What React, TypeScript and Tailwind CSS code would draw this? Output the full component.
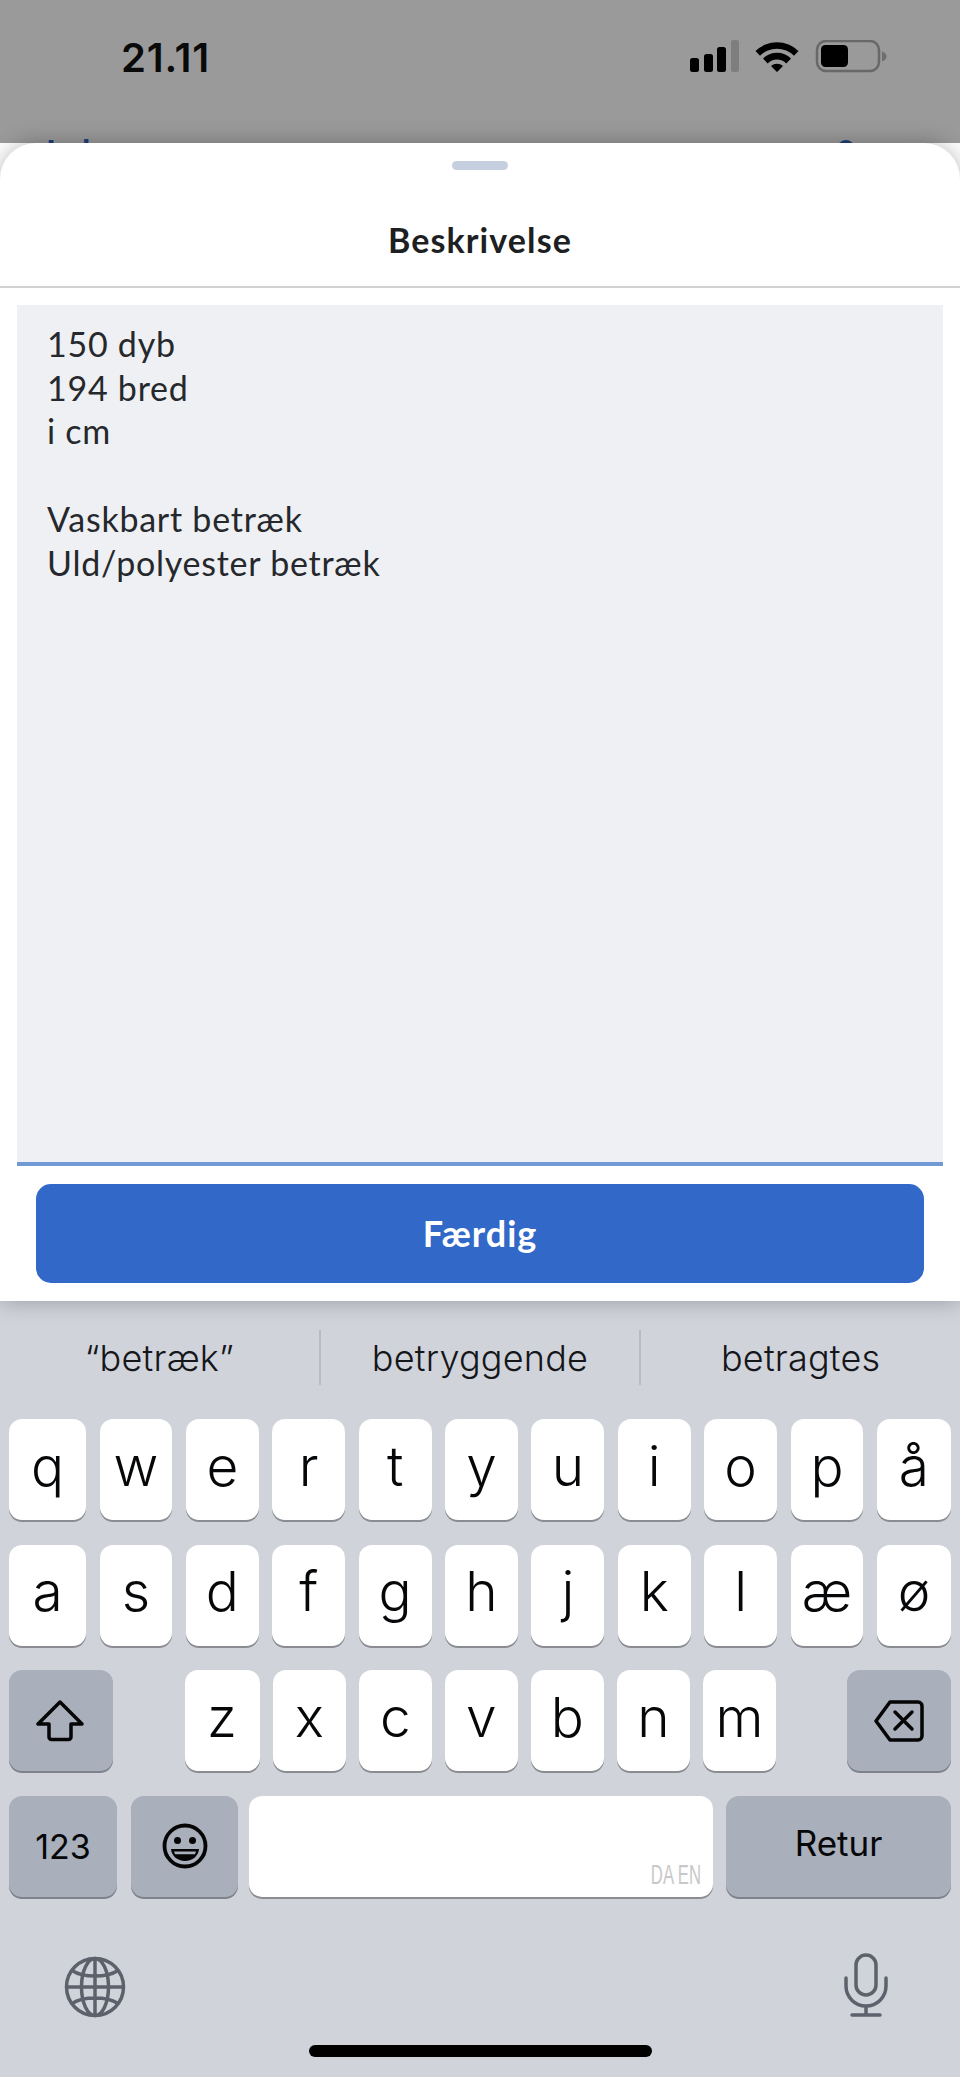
import { ReactNode } from "react";

const rowOne = ["w", "e", "r", "t", "y", "u", "i", "o", "p"];
const rowTwo = ["s", "d", "f", "g", "h", "j", "k", "l", "æ"];
const rowThree = ["x", "c", "v", "b", "n", "m"];

const keyFont = "font-['Inter',sans-serif] text-[#060709]";

function LetterKey({ label, className = "flex-1" }: { label: string; className?: string }) {
  return (
    <div
      className={`${className} ${keyFont} flex h-[101px] items-center justify-center rounded-[13px] bg-white pb-[7px] text-[55px] leading-none font-[350] shadow-[0_2px_0_#8a8c91]`}
    >
      {label}
    </div>
  );
}

function GrayKey({ children, className = "" }: { children: ReactNode; className?: string }) {
  return (
    <div
      className={`${className} ${keyFont} flex h-[101px] items-center justify-center rounded-[13px] bg-[#a9afbb] shadow-[0_2px_0_#7f828a]`}
    >
      {children}
    </div>
  );
}

function StatusBar() {
  return (
    <div className="relative h-[143px] bg-[#9a9a9a]">
      <div className="flex items-start justify-between pr-[73px] pl-[121px] pt-[35px]">
        <span className="font-['Inter',sans-serif] text-[40px] leading-[46px] font-semibold tracking-[0.8px] text-[#0a0a0a]">
          21.11
        </span>
        <svg width="197" height="34" viewBox="0 0 197 34" className="mt-[5px]">
          <rect x="0" y="18" width="9" height="14" rx="2.5" fill="#000" />
          <rect x="14" y="14" width="9" height="18" rx="2.5" fill="#000" />
          <rect x="27" y="7" width="9" height="25" rx="2.5" fill="#000" />
          <rect x="41" y="0" width="8" height="32" rx="2" fill="#7e7e7e" />
          <path
            d="M66 11.5a31 31 0 0 1 43 0l-4.5 4.8a24 24 0 0 0-34 0Z M73.5 19a20 20 0 0 1 28 0l-4.7 5a13 13 0 0 0-18.6 0Z M81.5 26.5a9 9 0 0 1 12 0L87.5 32.500Z"
            fill="#000"
            transform="translate(-0.500 -0.500)"
          />
          <rect x="127" y="1" width="62" height="30" rx="9" fill="none" stroke="#686868" strokeWidth="2.500" />
          <rect x="131" y="5" width="27" height="22" rx="4.500" fill="#000" />
          <path d="M192 11.500c3 1 4.500 3 4.500 5s-1.500 4-4.500 5Z" fill="#6e6e6e" />
        </svg>
      </div>
      <div className="absolute top-[132px] left-[46px] font-['Lato',sans-serif] text-[34px] leading-[40px] font-bold text-[#1d3f7c]">
        Luk
      </div>
      <div className="absolute top-[140px] left-[838px] h-[16px] w-[16px] rounded-full bg-[#1d3f7c]" />
    </div>
  );
}

function Sheet() {
  return (
    <div className="relative z-10 flex h-[1158px] flex-col rounded-t-[36px] bg-white shadow-[0_0_22px_rgba(0,0,0,0.28)]">
      <div className="flex h-[145px] flex-col items-center border-b-2 border-[#d2d2d2]">
        <div className="mt-[18px] h-[9px] w-[56px] rounded-full bg-[#c5cfe0]" />
        <div className="mt-[48px] font-['Lato',sans-serif] text-[34px] leading-[44px] font-bold tracking-[1.1px] text-[#1d1f22]">
          Beskrivelse
        </div>
      </div>
      <div className="mx-[17px] mt-[17px] h-[861px] border-b-4 border-[#7099d6] bg-[#eff0f3] px-[30px] pt-[17px] font-['Lato',sans-serif] text-[34px] leading-[43.700px] tracking-[0.75px] text-[#25282c]">
        <div>150 dyb</div>
        <div>194 bred</div>
        <div>i cm</div>
        <div className="h-[43.700px]" />
        <div>Vaskbart betræk</div>
        <div>Uld/polyester betræk</div>
      </div>
      <div className="mx-[36px] mt-[18px] flex h-[99px] items-center justify-center rounded-[15px] bg-[#3268c7] pb-[2px] font-['Lato',sans-serif] text-[36px] font-bold tracking-[1px] text-white">
        Færdig
      </div>
    </div>
  );
}

function Suggestions() {
  const words = ["“betræk”", "betryggende", "betragtes"];
  return (
    <div className="flex h-[118px] items-start pt-[29px]">
      {words.map((word, i) => (
        <div
          key={word}
          className={`flex h-[55px] flex-1 items-center justify-center font-['Inter',sans-serif] text-[36px] font-[350] tracking-[0.2px] text-[#14161a] ${
            i < 2 ? "border-r-2 border-[#b9bcc4]" : ""
          }`}
        >
          {word}
        </div>
      ))}
    </div>
  );
}

function ShiftIcon() {
  return (
    <svg width="50" height="42" viewBox="0 0 50 42" fill="none" stroke="#050505" strokeWidth="3.500" strokeLinejoin="round" className="mr-[3px]">
      <path d="M25 2 3 24h11v13a2.500 2.500 0 0 0 2.500 2.500h17A2.500 2.500 0 0 0 36 37V24h11Z" />
    </svg>
  );
}

function BackspaceIcon() {
  return (
    <svg width="50" height="42" viewBox="0 0 50 42" fill="none" stroke="#050505" strokeWidth="3.500" strokeLinejoin="round" strokeLinecap="round">
      <path d="M16 2h28a4 4 0 0 1 4 4v30a4 4 0 0 1-4 4H16L2 21Z" />
      <path d="m21 12 17 17M38 12 21 29" />
    </svg>
  );
}

function EmojiIcon() {
  return (
    <svg width="46" height="46" viewBox="0 0 46 46" fill="none">
      <circle cx="23" cy="23" r="20.500" stroke="#050505" strokeWidth="3.800" />
      <circle cx="15.500" cy="17.500" r="3.500" fill="#050505" />
      <circle cx="30.500" cy="17.500" r="3.500" fill="#050505" />
      <path d="M9 26h28c-.5 7-6.500 12-14 12S9.500 33 9 26Z" fill="#050505" />
      <path d="M12 28.500h22c-.3 1-.7 2-1.200 2.800H13.200c-.5-.8-.9-1.800-1.200-2.800Z" fill="#a9afbb" />
    </svg>
  );
}

function GlobeIcon() {
  return (
    <svg width="62" height="62" viewBox="0 0 62 62" fill="none" stroke="#5c616b" strokeWidth="3.500">
      <circle cx="31" cy="31" r="28.500" />
      <ellipse cx="31" cy="31" rx="13.500" ry="28.500" />
      <path d="M31 2.500v57M2.500 31h57M8 14.500c6 4 14 5.500 23 5.500s17-1.500 23-5.500M8 47.500c6-4 14-5.500 23-5.500s17 1.500 23 5.500" />
    </svg>
  );
}

function MicIcon() {
  return (
    <svg width="44" height="64" viewBox="0 0 44 64" fill="none" stroke="#5c616b" strokeWidth="3.500" strokeLinecap="round">
      <rect x="12" y="2" width="20" height="40" rx="10" />
      <path d="M2 25v8a20 20 0 0 0 40 0v-8M22 53v8M8 62h28" />
    </svg>
  );
}

function Keyboard() {
  return (
    <div className="flex h-[776px] flex-col bg-[#d0d3da]">
      <Suggestions />
      <div className="flex flex-col gap-[24.500px] pr-[9px] pl-[9px]">
        <div className="flex gap-[13.600px]">
          <LetterKey label="q" className="w-[77px]" />
          {rowOne.map((k) => (
            <LetterKey key={k} label={k} />
          ))}
          <LetterKey label="å" className="w-[74px]" />
        </div>
        <div className="flex gap-[13.600px]">
          <LetterKey label="a" className="w-[77px]" />
          {rowTwo.map((k) => (
            <LetterKey key={k} label={k} />
          ))}
          <LetterKey label="ø" className="w-[74px]" />
        </div>
        <div className="flex justify-between">
          <GrayKey className="w-[104px]">
            <ShiftIcon />
          </GrayKey>
          <div className="flex w-[591px] gap-[13.800px]">
            <LetterKey label="z" className="w-[75px]" />
            {rowThree.map((k) => (
              <LetterKey key={k} label={k} />
            ))}
          </div>
          <GrayKey className="w-[104px]">
            <BackspaceIcon />
          </GrayKey>
        </div>
        <div className="flex">
          <GrayKey className="w-[108px] text-[34px] font-normal">123</GrayKey>
          <GrayKey className="ml-[14px] w-[107px]">
            <EmojiIcon />
          </GrayKey>
          <div className="relative ml-[11px] h-[101px] flex-1 rounded-[13px] bg-white shadow-[0_2px_0_#8a8c91]">
            <span className="absolute right-[12px] bottom-[8px] origin-right scale-x-[0.62] font-['Liberation_Sans',sans-serif] text-[27px] leading-[28px] whitespace-nowrap text-[#c8c8c8]">
              DA EN
            </span>
          </div>
          <GrayKey className="ml-[13px] w-[225px] pb-[6px] text-[35px] font-normal">Retur</GrayKey>
        </div>
      </div>
      <div className="flex items-start justify-between pt-[56px] pr-[72px] pl-[64px]">
        <div className="mt-[3px]">
          <GlobeIcon />
        </div>
        <MicIcon />
      </div>
      <div className="mt-[27px] flex justify-center">
        <div className="h-[12px] w-[343px] rounded-full bg-black" />
      </div>
    </div>
  );
}

export default function App() {
  return (
    <div className="h-[2077px] w-[960px] overflow-hidden">
      <StatusBar />
      <Sheet />
      <Keyboard />
    </div>
  );
}
